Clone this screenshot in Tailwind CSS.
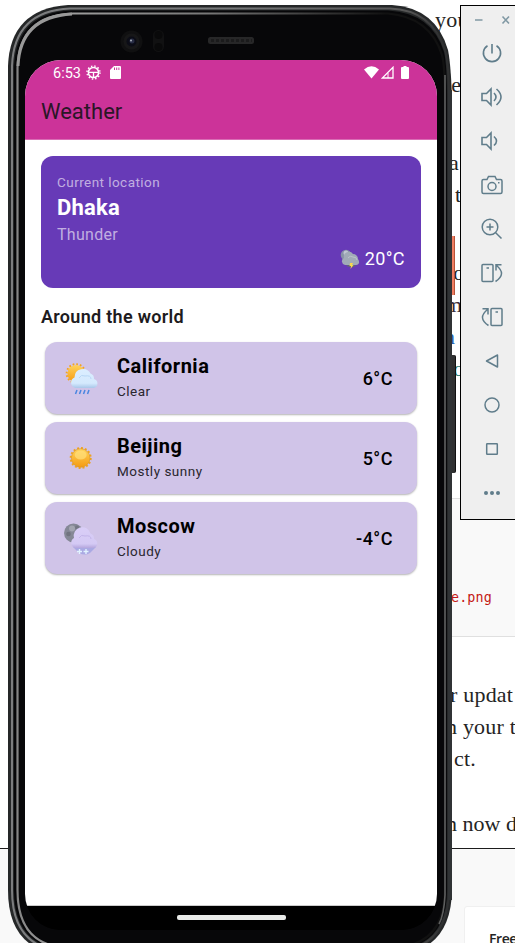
<!DOCTYPE html>
<html lang="en">
<head>
<meta charset="utf-8">
<title>Weather</title>
<script src="https://cdn.jsdelivr.net/npm/@tailwindcss/browser@4"></script>
</head>
<body class="relative h-[943px] w-[515px] overflow-hidden bg-white font-['Roboto',sans-serif]">

<!-- Article behind the emulator -->
<div class="flex h-[943px] flex-col overflow-hidden whitespace-nowrap font-['Liberation_Serif',serif] text-[22px] leading-[32px] tracking-[0.2px] text-[#242424]">
  <div class="h-[498px] shrink-0 pt-[4px]">
    <p class="pl-[435px]">you</p>
    <p class="mt-[33px] pl-[440px]">ke</p>
    <p class="mt-[46px] pl-[449px]">a</p>
    <p class="pl-[455px]">t</p>
    <p class="mt-[46px] pl-[442px]">vo</p>
    <p class="pl-[445px] text-[#3b2c35]">m</p>
    <p class="pl-[444px] text-[#2a5db0]">n</p>
    <p class="pl-[442px] text-[#2f7d74]">vo</p>
  </div>
  <div class="ml-10 flex h-[139px] shrink-0 items-center border-y border-[#e0e0e0] bg-[#f9f9f9] pt-[60px] pl-[411px]">
    <span class="font-['DejaVu_Sans_Mono',monospace] text-[13.4px] leading-none tracking-[0.1px] text-[#c41a16]">e.png</span>
  </div>
  <div class="h-[211px] shrink-0 overflow-hidden pt-[42px]">
    <p class="pl-[450px]">r updat</p>
    <p class="pl-[446px]">n your t</p>
    <p class="pl-[454px]">ct.</p>
    <p class="mt-[33px] pl-[446px] tracking-normal">n now d</p>
    <div class="mt-[23px] ml-[498px] h-px w-[3px] bg-[#777]"></div>
  </div>
  <div class="flex h-[95px] shrink-0 border-t border-[#1c1c1c] bg-[#f9f9f9] pt-[57px] pl-[464px]">
    <div class="h-20 w-40 shrink-0 rounded-tl-[3px] border border-[#f0f0f0] bg-white pt-[16px] pl-6 font-['Open_Sans',sans-serif] text-[14px] font-semibold tracking-[-0.4px]">Free</div>
  </div>
</div>

<!-- Highlight strip and hardware buttons -->
<div class="absolute top-[236px] left-[450px] h-[59px] w-[5px] border-r border-[#b6533a] bg-[#f07e62]"></div>
<div class="absolute top-[355px] left-[450px] h-[118px] w-[6px] rounded-r-[2px] border-r border-[#111] bg-[#303132]"></div>

<!-- Phone -->
<div class="absolute top-0 left-0 h-[943px] w-[460px] overflow-hidden">
  <svg class="absolute top-0 left-0" width="460" height="960" viewBox="0 0 460 960" fill="none">
    <defs>
      <linearGradient id="edge" gradientUnits="userSpaceOnUse" x1="8" y1="0" x2="453" y2="0">
        <stop offset="0" stop-color="#7c7d7f"/><stop offset=".5" stop-color="#77797a"/><stop offset=".9" stop-color="#555"/><stop offset=".97" stop-color="#303132"/><stop offset="1" stop-color="#303132"/>
      </linearGradient>
      <linearGradient id="inner" gradientUnits="userSpaceOnUse" x1="8" y1="0" x2="453" y2="0">
        <stop offset="0" stop-color="#808080"/><stop offset=".12" stop-color="#a0a0a0"/><stop offset=".45" stop-color="#777"/><stop offset=".85" stop-color="#111"/><stop offset="1" stop-color="#111"/>
      </linearGradient>
    </defs>
    <path d="M68 5H392Q436 8 448 50Q451 65 452 100V890Q451 955 388 955H72Q8 955 8 890V66Q10 9 68 5Z" fill="#252728"/>
    <path d="M70 8.500H390Q432 10 445 50Q449 65 449 100V890Q448 952 388 952H72Q12 952 12 890V66Q14 11 70 8.500Z" stroke="url(#edge)" stroke-width="2"/>
    <path d="M72 10.500H388Q432 13 444 52Q447 65 447 100V890Q447 950 388 950H72Q14 950 14 890V68Q16 12 72 10.500Z" fill="#070709"/>
    <path d="M73 13.500H388Q430 17 442 55Q445 66 445 100V890Q445 948 388 948H72Q17.500 948 17.500 890V68Q19 15 73 13.500Z" stroke="url(#inner)" stroke-width="2.200"/>
    <path d="M18 66Q20 17 72 14" stroke="#999" stroke-width="3"/>
    <path d="M445 75V895Q444 915 439 924" stroke="#5e5f5f" stroke-width="1.600"/>
    <path d="M450 90V900" stroke="#303335" stroke-width="4"/>
    <circle cx="131.500" cy="41.500" r="11" fill="#101011"/><circle cx="131.500" cy="41.500" r="8" fill="#171718"/><circle cx="131.500" cy="41.500" r="5" fill="#0b0c16"/><circle cx="132" cy="41" r="2.500" fill="#282d45"/><circle cx="131" cy="40.500" r="1" fill="#a6acb8"/>
    <rect x="153" y="30" width="11" height="22" rx="5.500" fill="#111112"/><circle cx="158.500" cy="35" r="4" fill="#09090a"/><circle cx="158.500" cy="47" r="4" fill="#09090a"/>
    <rect x="208" y="37" width="46" height="7" rx="2.500" fill="#272728"/><path d="M211 40.500H252" stroke="#1b1b1c" stroke-width="3" stroke-dasharray="3 2"/>
  </svg>

  <main class="absolute top-[60px] left-[25px] flex h-[870px] w-[412px] flex-col overflow-hidden rounded-[36px] bg-[linear-gradient(white_845px,black_845px)]">
    <header class="h-[80px] shrink-0 border-b border-[#d96db5] bg-[#cc3399]">
      <div class="flex h-[25px] items-center pl-[28px] text-white">
        <span class="pt-[3px] text-[14.5px] leading-none">6:53</span>
        <svg class="ml-[5px]" width="15" height="15" viewBox="0 0 15 15" fill="none" stroke="#fff"><circle cx="7.500" cy="7.500" r="5.100" stroke-width="1.500"/><circle cx="7.500" cy="7.500" r="6.500" stroke-width="1.400" stroke-dasharray="1.500 1.903"/><path d="M2.500 7.300H12.500M7.500 7V13" stroke-width="1.300"/></svg>
        <svg class="ml-[9px]" width="11" height="13" viewBox="0 0 11 13"><path d="M4 0H10Q11 0 11 1V12Q11 13 10 13H1Q0 13 0 12V4Z" fill="#fff"/><path d="M4.500 1.500V4M6.700 1.500V4M8.900 1.500V4" stroke="#cc3399"/></svg>
        <div class="ml-auto mr-[28px] flex items-center">
          <svg width="15" height="13" viewBox="0 0 15 13"><path d="M0 3.500Q7.500 -2.800 15 3.500L7.500 12.500Z" fill="#fff"/></svg>
          <svg class="ml-[2px]" width="13" height="13" viewBox="0 0 13 13" fill="none" stroke="#fff"><path d="M1.300 12H12V1.300Z" stroke-width="1.300"/><path d="M7 7V12"/></svg>
          <svg class="ml-[7px]" width="8" height="13" viewBox="0 0 8 13"><path d="M2.500 0H5.500V1H7Q8 1 8 2V12Q8 13 7 13H1Q0 13 0 12V2Q0 1 1 1H2.500Z" fill="#fff"/></svg>
        </div>
      </div>
      <h1 class="pt-[13px] pl-4 text-[22px] leading-[28px] text-[#2a1627]">Weather</h1>
    </header>

    <section class="mx-4 mt-4 flex h-[132px] w-[380px] shrink-0 flex-col rounded-[12px] bg-[#673ab7] px-4 pt-[16px] text-white">
      <p class="text-[13.5px] leading-[20px] tracking-[0.45px] text-white/60">Current location</p>
      <h2 class="mt-[2px] text-[22px] leading-[28px] font-bold tracking-[0.2px]">Dhaka</h2>
      <p class="mt-px text-[16px] leading-[24px] tracking-[0.3px] text-white/60">Thunder</p>
      <div class="flex h-[24px] items-center justify-end gap-[5px] text-[18px] leading-[24px]">
        <svg width="20" height="20" viewBox="0 0 20 20"><circle cx="6" cy="6" r="5.300" fill="#8791a8"/><circle cx="6" cy="4" r="2.500" fill="#c0c6d2"/><path d="M5 16A3.700 3.700 0 0 1 4 9A5 5 0 0 1 13 5A5 5 0 0 1 18 10Q21 15 16 16Z" fill="#a1abb7"/><path d="M8 9Q10 6 13 8Q17 8 17 11" stroke="#bcc3cb" fill="none"/><path d="M6 16H16L14 18H8Z" fill="#626282"/><path d="M10 14H13L12 16H13.500L10.500 20L11 17H9.500Z" fill="#f8d94e"/></svg>
        <span class="tracking-[0.4px]">20°C</span>
      </div>
    </section>

    <h3 class="mt-[17px] shrink-0 pl-4 text-[18px] leading-[24px] font-semibold tracking-[0.3px] text-[#1d1b20]">Around the world</h3>

    <div class="mt-[13px] ml-5 flex w-[372px] shrink-0 flex-col gap-2">
      <article class="flex h-[72px] items-center rounded-[12px] bg-[#d0c4e8] pr-6 pl-[18px] shadow-[0_1px_2px_rgba(0,0,0,0.3)]">
        <svg class="shrink-0" width="38" height="38" viewBox="0 0 38 38"><defs><linearGradient id="sun" x1="0" y1="0" x2="0" y2="1"><stop stop-color="#ffd35c"/><stop offset="1" stop-color="#f59b12"/></linearGradient><linearGradient id="cloud" x1="0" y1="0" x2="0" y2="1"><stop stop-color="#dbeeff"/><stop offset=".75" stop-color="#d4e9fd"/><stop offset="1" stop-color="#a9c7e9"/></linearGradient></defs><circle cx="13" cy="14.500" r="9.300" fill="none" stroke="#f4a51c" stroke-width="2" stroke-dasharray="1.700 1.950"/><circle cx="13" cy="14.500" r="8.600" fill="url(#sun)"/><path d="M12.500 29A5.500 5.500 0 0 1 11.500 18.500A8.500 8.500 0 0 1 27.500 14.500A5.500 5.500 0 0 1 31 20A4.600 4.600 0 0 1 30.500 29Z" fill="url(#cloud)"/><path d="M16 19Q18 15 22 17Q28 16 28 20" fill="none" stroke="#b8d7f5"/><path d="M14 31L12.500 35M18 31L16.500 35M22 31L20.500 35M26 31L24.500 35" stroke="#4a86e0" stroke-width="1.500"/></svg>
        <div class="ml-[16px] flex-1 pb-[3px]"><h4 class="text-[20px] leading-[26px] font-bold tracking-[0.5px] text-black">California</h4><p class="mt-[2px] text-[13.5px] leading-[20px] tracking-[0.5px] text-[#29262e]">Clear</p></div>
        <span class="text-[18px] font-medium tracking-[0.5px] text-black">6°C</span>
      </article>
      <article class="flex h-[72px] items-center rounded-[12px] bg-[#d0c4e8] pr-6 pl-[18px] shadow-[0_1px_2px_rgba(0,0,0,0.3)]">
        <svg class="shrink-0" width="38" height="38" viewBox="0 0 38 38"><circle cx="17.700" cy="19" r="10" fill="none" stroke="#efa321" stroke-width="2" stroke-dasharray="2 1.927"/><circle cx="17.700" cy="19" r="9.300" fill="url(#sun)" stroke="#d99522" stroke-width=".6"/><ellipse cx="17.700" cy="16" rx="6" ry="4.500" fill="#ffdf7c" opacity=".7"/></svg>
        <div class="ml-[16px] flex-1 pb-[3px]"><h4 class="text-[20px] leading-[26px] font-bold tracking-[0.5px] text-black">Beijing</h4><p class="mt-[2px] text-[13.5px] leading-[20px] tracking-[0.5px] text-[#29262e]">Mostly sunny</p></div>
        <span class="text-[18px] font-medium tracking-[0.5px] text-black">5°C</span>
      </article>
      <article class="flex h-[72px] items-center rounded-[12px] bg-[#d0c4e8] pr-6 pl-[18px] shadow-[0_1px_2px_rgba(0,0,0,0.3)]">
        <svg class="shrink-0" width="38" height="38" viewBox="0 0 38 38"><defs><linearGradient id="snow" x1="0" y1="0" x2="0" y2="1"><stop stop-color="#d9cef7"/><stop offset=".8" stop-color="#d4c9f4"/><stop offset="1" stop-color="#b4a6dd"/></linearGradient></defs><circle cx="10.500" cy="14" r="9.500" fill="#858896"/><circle cx="9" cy="9.500" r="3" fill="#a2a5b0"/><circle cx="5.500" cy="15" r="2.300" fill="#71747f"/><circle cx="14" cy="8.500" r="2" fill="#747784"/><path d="M10 28H33L27 34Q22 37 16 34Z" fill="#aaa9e3"/><path d="M12 29A5.500 5.500 0 0 1 11 19A8.500 8.500 0 0 1 27.500 14.500A5.500 5.500 0 0 1 31 20A4.700 4.700 0 0 1 31 29Z" fill="url(#snow)"/><path d="M16 19Q18 15 22 17Q28 16 28 20" fill="none" stroke="#c2b4e9"/><path d="M16.500 30V35M14 32.500H19M23 30V35M20.500 32.500H25.500" stroke="#e2f3ff" stroke-width="1.400"/></svg>
        <div class="ml-[16px] flex-1 pb-[3px]"><h4 class="text-[20px] leading-[26px] font-bold tracking-[0.5px] text-black">Moscow</h4><p class="mt-[2px] text-[13.5px] leading-[20px] tracking-[0.5px] text-[#29262e]">Cloudy</p></div>
        <span class="text-[18px] font-medium tracking-[0.5px] text-black">-4°C</span>
      </article>
    </div>

    <footer class="mt-auto flex h-[25px] shrink-0 justify-center border-t border-[#ccc] bg-black pt-[9px]"><div class="h-[5px] w-[109px] rounded-[2px] bg-[#e9ebe9]"></div></footer>
  </main>
</div>

<!-- Emulator toolbar -->
<aside class="absolute top-[5px] left-[460px] flex h-[515px] w-[64px] flex-col border border-black bg-[#efefef] text-[#607d8b]">
  <div class="flex h-[28px] items-center pl-[14px]">
    <svg width="35" height="10" viewBox="0 0 35 10" fill="none" stroke="#8199a4" stroke-width="1.600"><path d="M0 5H7.500M27.500 1.500L34 8.500M34 1.500L27.500 8.500"/></svg>
  </div>
  <div class="flex flex-col gap-5 pt-[7px] pl-[19px]">
    <svg width="24" height="24" viewBox="0 0 24 24" fill="none" stroke="currentColor" stroke-width="1.600"><path d="M12 3V12.500M7.500 4.700A8.600 8.600 0 1 0 16.500 4.700"/></svg>
    <svg width="24" height="24" viewBox="0 0 24 24" fill="none" stroke="currentColor" stroke-width="1.600"><path d="M2 8.500H6.500L11 4V20L6.500 15.500H2ZM14 8Q18 12 14 16M16.500 4Q25.500 12 16.500 20"/></svg>
    <svg width="24" height="24" viewBox="0 0 24 24" fill="none" stroke="currentColor" stroke-width="1.600"><path d="M2 8.500H6.500L11 4V20L6.500 15.500H2ZM14 7.500Q19 12 14 16.500"/></svg>
    <svg width="24" height="24" viewBox="0 0 24 24" fill="none" stroke="currentColor" stroke-width="1.500"><path d="M3.500 6.500H7L8.500 3.500H15L16.500 6.500H20.500Q22 6.500 22 8V19Q22 20.500 20.500 20.500H3.500Q2 20.500 2 19V8Q2 6.500 3.500 6.500Z"/><circle cx="12" cy="13.500" r="4"/><path d="M18 9.800H19.500"/></svg>
    <svg width="24" height="24" viewBox="0 0 24 24" fill="none" stroke="currentColor" stroke-width="1.500"><circle cx="10" cy="10" r="7.800"/><path d="M15.700 15.700L21.500 21.500M10 6.500V13.500M6.500 10H13.500"/></svg>
    <svg width="24" height="24" viewBox="0 0 24 24" fill="none" stroke="currentColor" stroke-width="1.500"><rect x="2" y="3.500" width="11" height="17" rx="1"/><path d="M6.500 7H9M15.500 20.500Q27 13 16.500 4.500M21.500 3.800H16V9.500"/></svg>
    <svg width="24" height="24" viewBox="0 0 24 24" fill="none" stroke="currentColor" stroke-width="1.500"><rect x="11" y="3.500" width="11" height="17" rx="1"/><path d="M15.500 7H18M8.500 20.500Q-3 13 7.500 4.500M2.500 3.800H8V9.500"/></svg>
    <svg width="24" height="24" viewBox="0 0 24 24" fill="none" stroke="currentColor" stroke-width="1.500" stroke-linejoin="round"><path d="M17.500 6V18L6.500 12Z"/></svg>
    <svg width="24" height="24" viewBox="0 0 24 24" fill="none" stroke="currentColor" stroke-width="1.500"><circle cx="12" cy="12" r="7"/></svg>
    <svg width="24" height="24" viewBox="0 0 24 24" fill="none" stroke="currentColor" stroke-width="1.500"><rect x="6.700" y="6.700" width="10.600" height="10.600" rx=".5"/></svg>
    <svg width="24" height="24" viewBox="0 0 24 24" fill="currentColor"><circle cx="6" cy="12" r="2"/><circle cx="12" cy="12" r="2"/><circle cx="18" cy="12" r="2"/></svg>
  </div>
</aside>
</body>
</html>
